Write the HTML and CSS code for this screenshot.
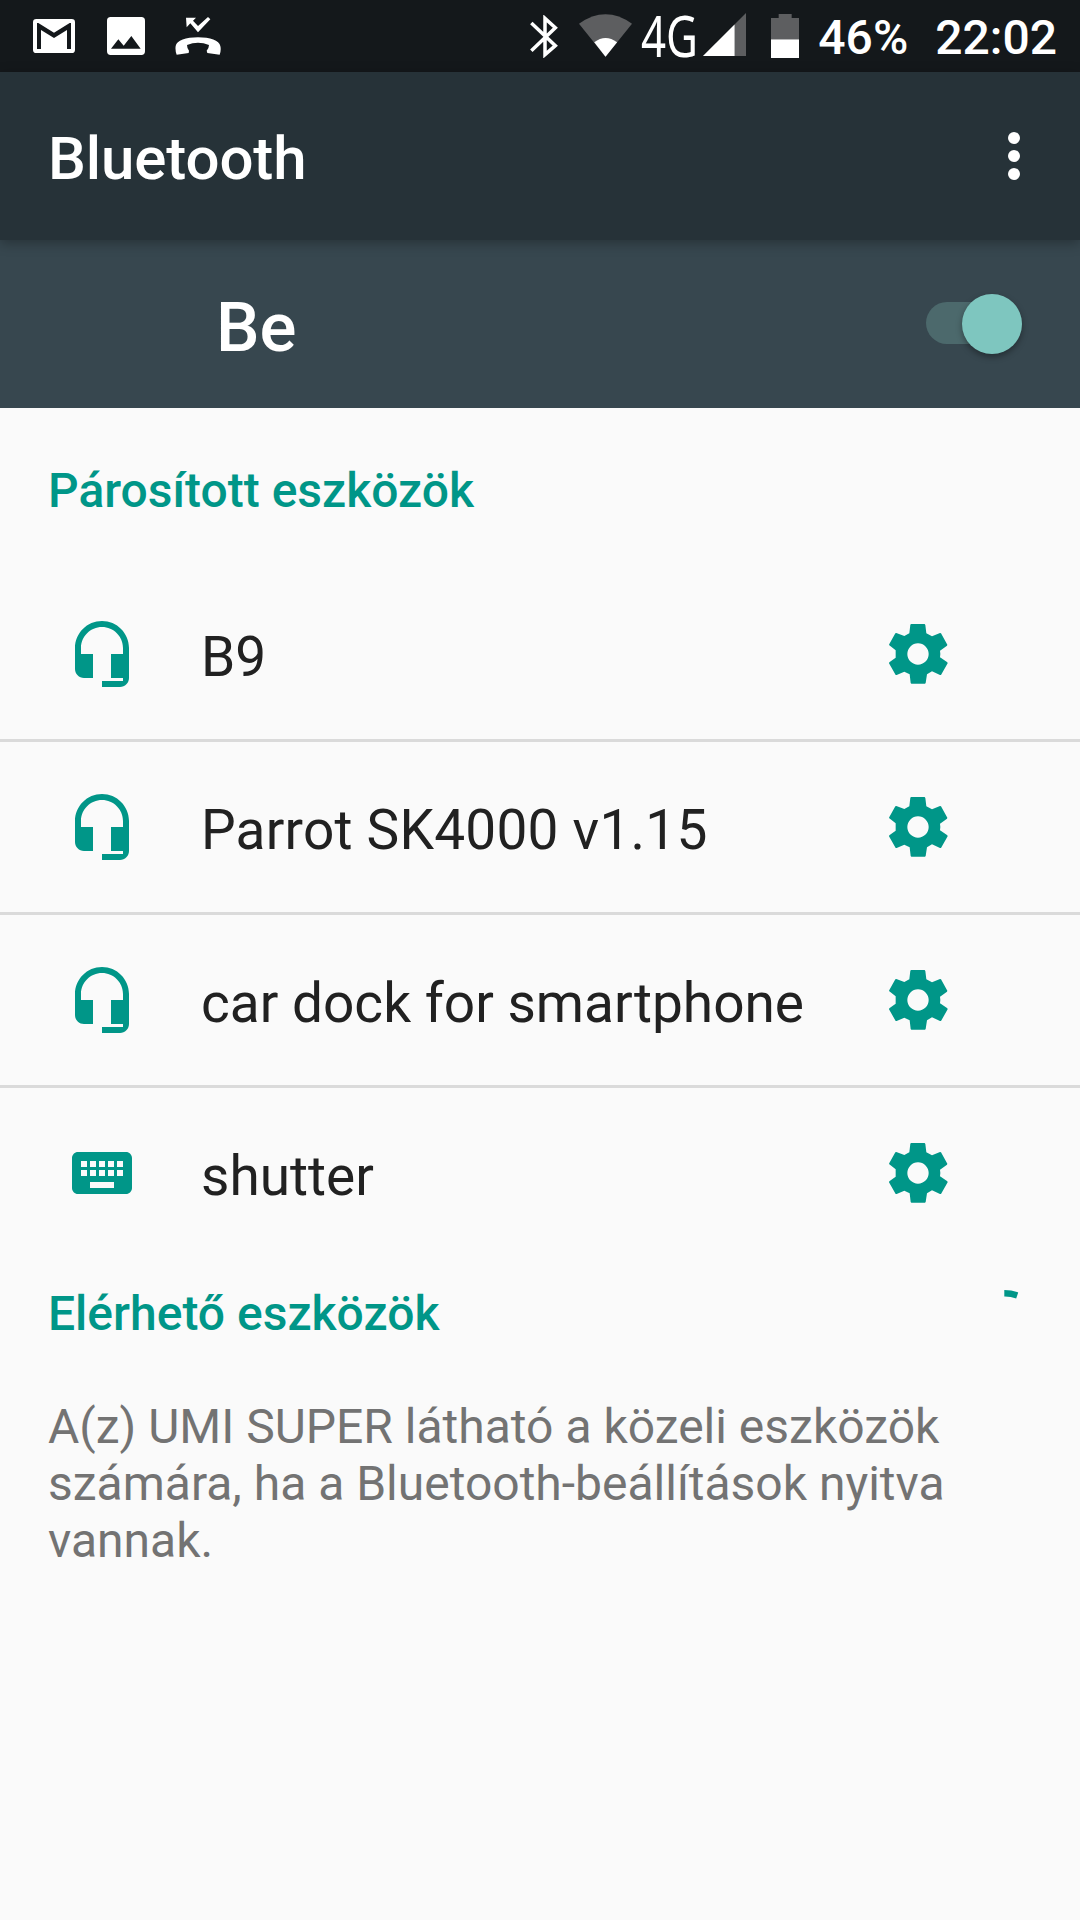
FILE: index.html
```html
<!DOCTYPE html>
<html lang="hu">
<head>
<meta charset="utf-8">
<title>Bluetooth</title>
<link rel="stylesheet" href="styles.css">
</head>
<body>
<svg class="defs" aria-hidden="true">
  <symbol id="headset" viewBox="0 0 24 24"><path d="M12 1c-4.97 0-9 4.03-9 9v7c0 1.66 1.34 3 3 3h3v-8H5v-2c0-3.87 3.13-7 7-7s7 3.13 7 7v2h-4v8h4v1h-7v2h6c1.66 0 3-1.34 3-3V10c0-4.97-4.03-9-9-9z"/></symbol>
  <symbol id="keyboard" viewBox="0 0 24 24"><path fill-rule="evenodd" d="M20 5H4c-1.1 0-2 .9-2 2v10c0 1.1.9 2 2 2h16c1.1 0 2-.9 2-2V7c0-1.100-.9-2-2-2zM5 8h2v2H5zM8 8h2v2H8zM11 8h2v2h-2zM14 8h2v2h-2zM17 8h2v2h-2zM5 11h2v2H5zM8 11h2v2H8zM11 11h2v2h-2zM14 11h2v2h-2zM17 11h2v2h-2zM8 15h8v2H8z"/></symbol>
  <symbol id="gear" viewBox="66 54 216 216"><path fill-rule="evenodd" d="M153 72H194L196 75L199 100L216 109L240 99L243 100L262 134L261 137L240 152L241 162L240 172L262 187L263 190L243 225H240L216 214L201 223L197 249L195 251H154L152 249L149 223L133 215L110 225H107L87 190L88 187L107 173V151L87 135L88 132L106 100L109 99L133 108L148 100L151 74ZM174 130a32 32 0 1 0 0 64a32 32 0 1 0 0-64z"/></symbol>
</svg>

<header class="status">
  <svg class="gmail" viewBox="99 57 126 102"><path fill-rule="evenodd" d="M109 57H215Q225 57 225 67V149Q225 159 215 159H109Q99 159 99 149V67Q99 57 109 57ZM111 69V147H123V90L162 114L201 90V147H213V69H209L162 98L115 69Z"/></svg>
  <svg class="image" viewBox="321 51 114 114"><path fill-rule="evenodd" d="M332 51H424Q435 51 435 62V154Q435 165 424 165H332Q321 165 321 154V62Q321 51 332 51ZM333 146H422L394 108L371 137L355 118Z"/></svg>
  <svg class="missed" viewBox="525 50 138 114"><path d="M558 52H588L579 61L594 77L624 50L631 57L594 96L571 69L560 81ZM527 137C530 121 558 111 594 111C630 111 658 121 661 137Q664 150 659 163L622 158L620 151Q627 143 627 134Q594 121 561 134Q561 144 567 151L566 158L530 163Q525 150 527 137Z"/></svg>
  <div class="right">
    <svg class="bt" viewBox="91 44 84 129"><path fill="none" stroke="#fff" stroke-width="10.500" d="M95 68L167 136L136 163V54L167 82L95 151"/></svg>
    <svg class="wifi" viewBox="240 42 160 129"><path class="dim" d="M240 71Q320 14 400 71L320 171Z"/><path d="M286 127Q320 101 355 127L320 171Z"/></svg>
    <svg class="net" viewBox="0 0 60 72"><text x="0" y="57" textLength="57" lengthAdjust="spacingAndGlyphs">4G</text></svg>
    <svg class="signal" viewBox="613 40 128 128"><path class="dim" d="M613 168H741V40Z"/><path d="M613 168H707V74Z"/></svg>
    <svg class="battery" viewBox="96 42 84 132"><path class="dim" d="M96 54H119V42H158V54H180V118H96Z"/><path d="M96 118H180V174H96Z"/></svg>
    <span class="percent">46%</span>
    <span class="clock">22:02</span>
  </div>
</header>

<div class="appbar">
  <h1>Bluetooth</h1>
  <div class="more"><i></i><i></i><i></i></div>
</div>

<div class="switchbar">
  <span>Be</span>
  <div class="switch"><div class="thumb"></div></div>
</div>

<main>
  <h2 class="paired">Párosított eszközök</h2>
  <ul>
    <li><svg><use href="#headset"/></svg><span>B9</span><svg><use href="#gear"/></svg></li>
    <li><svg><use href="#headset"/></svg><span class="wide">Parrot SK4000 v1.15</span><svg><use href="#gear"/></svg></li>
    <li><svg><use href="#headset"/></svg><span>car dock for smartphone</span><svg><use href="#gear"/></svg></li>
    <li><svg><use href="#keyboard"/></svg><span>shutter</span><svg><use href="#gear"/></svg></li>
  </ul>
  <div class="available">
    <h2>Elérhető eszközök</h2>
    <svg class="spinner" viewBox="0 0 84 84"><path d="M42.300 0A42 42 0 0 1 56.200 2.400L54.200 8.400A36 36 0 0 0 42.300 6.600Z"/></svg>
  </div>
  <p>A(z) UMI SUPER látható a közeli eszközök számára, ha a Bluetooth-beállítások nyitva vannak.</p>
</main>
</body>
</html>
```
FILE: styles.css
```css
* { box-sizing: border-box; }
body {
  margin: 0;
  width: 1080px;
  height: 1920px;
  overflow: hidden;
  background: #fafafa;
  font-family: Roboto, sans-serif;
}
h1, h2, p, ul { margin: 0; padding: 0; font-weight: 500; }
svg { display: block; flex: none; }
.defs { position: absolute; width: 0; height: 0; }

.status {
  display: flex;
  align-items: flex-start;
  height: 72px;
  padding-left: 33px;
  background: #14181b;
  color: #fff;
  fill: #fff;
}
.dim { fill: #5d5e60; }
.gmail { width: 42px; height: 34px; margin-top: 19px; }
.image { width: 38px; height: 38px; margin: 17px 0 0 32px; }
.missed { width: 46px; height: 38px; margin: 17px 0 0 30px; }
.right {
  display: flex;
  flex: 1;
  justify-content: flex-end;
  padding-right: 23px;
  font-size: 48px;
  font-weight: 500;
  line-height: 75px;
}
.bt { width: 28px; height: 43px; margin: 15px 21px 0 0; }
.wifi { width: 53px; height: 43px; margin: 14px 9px 0 0; }
.net { width: 60px; height: 72px; margin-right: 2px; overflow: visible; }
.net text { font: 400 56px "Noto Sans", sans-serif; }
.signal { width: 43px; height: 43px; margin: 13px 25px 0 0; }
.battery { width: 28px; height: 44px; margin: 14px 19px 0 0; }
.percent { margin-right: 27px; }

.appbar {
  position: relative;
  display: flex;
  align-items: center;
  justify-content: space-between;
  height: 168px;
  padding: 0 60px 0 48px;
  background: #263238;
  color: #fff;
  box-shadow: 0 3px 12px rgba(0, 0, 0, .3);
}
.appbar h1 { padding-top: 5px; font-size: 60px; line-height: 70px; letter-spacing: -.1px; }
.more { display: grid; gap: 6px; }
.more i { width: 12px; height: 12px; border-radius: 50%; background: #fff; }

.switchbar {
  display: flex;
  align-items: center;
  justify-content: space-between;
  height: 168px;
  padding: 0 58px 0 216px;
  background: #37474f;
  color: #fff;
  font-size: 69px;
  font-weight: 500;
}
.switchbar span { padding-top: 7px; line-height: 80px; }
.switch {
  display: flex;
  align-items: center;
  justify-content: flex-end;
  width: 96px;
  height: 42px;
  margin-top: -2px;
  padding-right: .5px;
  border-radius: 21px;
  background: #4c696c;
}
.thumb {
  width: 60px;
  height: 60px;
  flex: none;
  margin-top: 1px;
  border-radius: 50%;
  background: #7ec6bf;
  box-shadow: 0 3px 6px rgba(0, 0, 0, .35);
}

h2 { color: #009688; font-size: 48px; line-height: 57px; }
.paired { height: 161px; padding: 54px 0 0 48px; }
ul { list-style: none; }
li {
  display: flex;
  align-items: center;
  height: 173px;
  padding: 0 126px 0 66px;
  border-bottom: 3px solid #dadada;
  fill: #009688;
}
li:last-child { height: 170px; border: 0; }
li svg { width: 72px; height: 72px; }
li span {
  flex: 1;
  padding: 7px 0 0 63px;
  color: #212121;
  font-size: 55px;
  font-weight: 400;
  line-height: 65px;
}
li .wide { letter-spacing: .22px; }
.available {
  display: flex;
  justify-content: space-between;
  height: 140px;
  padding: 27px 34px 0 48px;
}
.spinner { width: 84px; height: 84px; margin-top: 5px; fill: #009688; }
p {
  width: 980px;
  padding-left: 48px;
  color: #737373;
  font-size: 48px;
  font-weight: 400;
  line-height: 57px;
}
```
